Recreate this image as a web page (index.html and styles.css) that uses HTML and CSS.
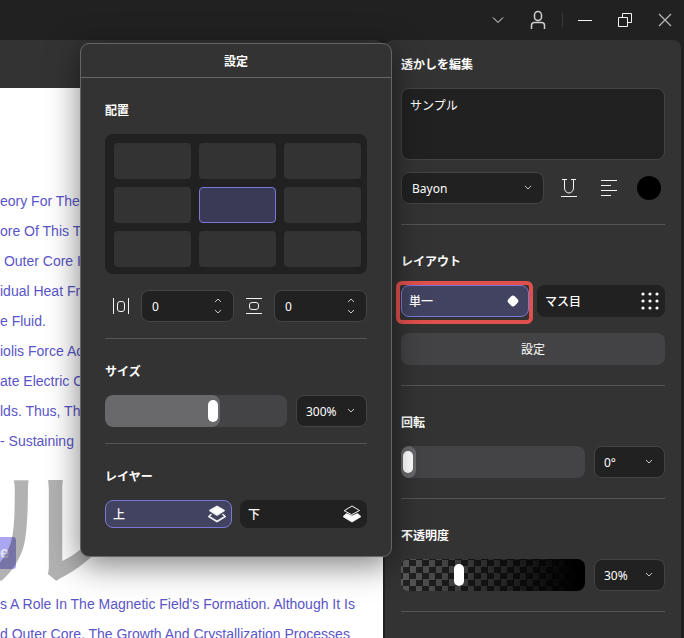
FILE: index.html
```html
<!DOCTYPE html>
<html lang="ja">
<head>
<meta charset="utf-8">
<meta name="viewport" content="width=device-width, initial-scale=1">
<title>透かしを編集</title>
<link rel="stylesheet" href="styles.css">
</head>
<body>
<header class="titlebar">
  <button class="win-btn" aria-label="メニュー"><svg width="12" height="8" viewBox="0 0 12 8"><path d="M1 1.500l5 5 5-5"/></svg></button>
  <button class="win-btn" aria-label="アカウント"><svg class="person" width="16" height="20" viewBox="0 0 16 20"><rect x="4.500" y="1.500" width="7" height="9" rx="3.500"/><path d="M1.500 19v-3.500a3 3 0 0 1 3-3h7a3 3 0 0 1 3 3V19"/></svg></button>
  <span class="win-sep"></span>
  <button class="win-btn" aria-label="最小化"><svg width="14" height="15" viewBox="0 0 14 15"><path d="M0 7.500h14"/></svg></button>
  <button class="win-btn" aria-label="元に戻す"><svg width="14" height="14" viewBox="0 0 14 14"><path d="M.5 4.500h9v9h-9zM4.500 4.500v-4h9v9h-4"/></svg></button>
  <button class="win-btn" aria-label="閉じる"><svg class="close" width="14" height="14" viewBox="0 0 14 14"><path d="M1 1l12 12M13 1L1 13"/></svg></button>
</header>

<main class="workspace">
  <section class="document">
    <div class="toolbar"></div>
    <article class="page">
      <p class="lines">eory For The<br>ore Of This Th<br>&nbsp;Outer Core I<br>idual Heat Fr<br>e Fluid.<br>iolis Force Ac<br>ate Electric C<br>lds. Thus, Th<br>- Sustaining</p>
      <h2 class="page-heading"><mark>e</mark></h2>
      <p class="lines">s A Role In The Magnetic Field's Formation. Although It Is<br>d Outer Core. The Growth And Crystallization Processes</p>
      <div class="watermark">ル</div>
    </article>
  </section>

  <aside class="panel">
    <section class="group">
      <h2><label for="wm-text">透かしを編集</label></h2>
      <textarea id="wm-text" class="field text-area">サンプル</textarea>
      <div class="format-row">
        <div class="picker font-picker">
          <select class="field" aria-label="フォント"><option>Bayon</option></select>
          <svg width="8" height="6" viewBox="0 0 8 6"><path d="M1 1l3 3 3-3"/></svg>
        </div>
        <button class="icon-btn" aria-label="下線"><svg width="16" height="18" viewBox="0 0 16 18"><path d="M1 .5h5M10 .5h5M3.500.5v8.500a4.500 5 0 0 0 9 0V.5M0 17.500h16"/></svg></button>
        <button class="icon-btn" aria-label="左揃え"><svg width="16" height="17" viewBox="0 0 16 17"><path d="M0 .5h16M0 5.500h10M0 10.500h16M0 15.500h10"/></svg></button>
        <button class="color-btn" aria-label="色"></button>
      </div>
    </section>

    <section class="group">
      <h2>レイアウト</h2>
      <div class="choices">
        <div class="callout">
          <button class="choice selected"><span>単一</span><svg class="solid" width="22" height="20" viewBox="0 0 22 20"><path d="M9 5.600a2.800 2.800 0 0 1 4 0l2.400 2.400a2.800 2.800 0 0 1 0 4l-2.400 2.400a2.800 2.800 0 0 1-4 0l-2.400-2.400a2.800 2.800 0 0 1 0-4z"/></svg></button>
        </div>
        <button class="choice"><span>マス目</span><svg class="solid" width="20" height="20" viewBox="0 0 20 20"><g><circle cx="3" cy="3" r="1.600"/><circle cx="10" cy="3" r="1.600"/><circle cx="17" cy="3" r="1.600"/><circle cx="3" cy="10" r="1.600"/><circle cx="10" cy="10" r="1.600"/><circle cx="17" cy="10" r="1.600"/><circle cx="3" cy="17" r="1.600"/><circle cx="10" cy="17" r="1.600"/><circle cx="17" cy="17" r="1.600"/></g></svg></button>
      </div>
      <button class="wide-btn">設定</button>
    </section>

    <section class="group">
      <h2><label for="rotation">回転</label></h2>
      <div class="slider-row">
        <div class="slider" style="--value: 0"><span class="fill"></span><input id="rotation" type="range" min="0" max="360" value="0"></div>
        <div class="picker small"><select class="field" aria-label="回転角度"><option>0°</option></select><svg width="8" height="6" viewBox="0 0 8 6"><path d="M1 1l3 3 3-3"/></svg></div>
      </div>
    </section>

    <section class="group">
      <h2><label for="opacity">不透明度</label></h2>
      <div class="slider-row">
        <div class="slider checker"><input id="opacity" type="range" min="0" max="100" value="30"></div>
        <div class="picker small"><select class="field" aria-label="不透明度の値"><option>30%</option></select><svg width="8" height="6" viewBox="0 0 8 6"><path d="M1 1l3 3 3-3"/></svg></div>
      </div>
    </section>
  </aside>

  <div class="popup" role="dialog" aria-labelledby="popup-title">
    <h1 id="popup-title">設定</h1>
    <div class="popup-body">
      <section class="group">
        <h2>配置</h2>
        <div class="anchor-grid">
          <button aria-label="左上"></button><button aria-label="上中央"></button><button aria-label="右上"></button>
          <button aria-label="左中央"></button><button class="active" aria-label="中央"></button><button aria-label="右中央"></button>
          <button aria-label="左下"></button><button aria-label="下中央"></button><button aria-label="右下"></button>
        </div>
        <div class="offset-row">
          <label for="off-x" aria-label="横位置"><svg width="16" height="16" viewBox="0 0 16 16"><path d="M.5 0v16M15.500 0v16"/><rect x="4.500" y="3.500" width="7" height="10" rx="2.500"/></svg></label>
          <div class="stepper"><input id="off-x" class="field" type="number" value="0"><span class="arrows"><svg width="8" height="5" viewBox="0 0 8 5"><path d="M1 4l3-3 3 3"/></svg><svg width="8" height="5" viewBox="0 0 8 5"><path d="M1 1l3 3 3-3"/></svg></span></div>
          <label for="off-y" aria-label="縦位置"><svg width="16" height="16" viewBox="0 0 16 16"><path d="M0 .5h16M0 15.500h16"/><rect x="3.500" y="4.500" width="9" height="7" rx="2.500"/></svg></label>
          <div class="stepper"><input id="off-y" class="field" type="number" value="0"><span class="arrows"><svg width="8" height="5" viewBox="0 0 8 5"><path d="M1 4l3-3 3 3"/></svg><svg width="8" height="5" viewBox="0 0 8 5"><path d="M1 1l3 3 3-3"/></svg></span></div>
        </div>
      </section>

      <section class="group">
        <h2><label for="size">サイズ</label></h2>
        <div class="slider-row">
          <div class="slider" style="--value: 0.6"><span class="fill"></span><input id="size" type="range" min="0" max="500" value="300"></div>
          <div class="picker small"><select class="field" aria-label="サイズの値"><option>300%</option></select><svg width="8" height="6" viewBox="0 0 8 6"><path d="M1 1l3 3 3-3"/></svg></div>
        </div>
      </section>

      <section class="group">
        <h2>レイヤー</h2>
        <div class="choices">
          <button class="choice selected"><span>上</span><svg class="layers" width="20" height="18" viewBox="0 0 20 18"><path class="front" d="M10 1.500l7 4-7 4.500-7-4.500z"/><path d="M4 9.500L1.800 11.500 10 16.500l8.200-5L16 9.500"/></svg></button>
          <button class="choice"><span>下</span><svg class="layers" width="20" height="18" viewBox="0 0 20 18"><path class="back" d="M2.500 5.500L10 1l7.500 4.500L10 9.500z"/><path class="front" d="M4.500 9L1.800 11.500 10 16.500l8.200-5L15.500 9 10 11.500z"/></svg></button>
        </div>
      </section>
    </div>
  </div>
</main>
</body>
</html>
```
FILE: styles.css
```css
:root {
  --surface: #333333;
  --dark: #212122;
  --line: #444345;
  --accent: #7b77d8;
  --ui: "Noto Sans", "Noto Sans CJK JP", sans-serif;
}

* { box-sizing: border-box; }

body {
  margin: 0;
  min-height: 100vh;
  display: flex;
  flex-direction: column;
  background: #212121;
  color: #fff;
  font: 12px/24px var(--ui);
}

h1, h2, p { margin: 0; }

button, input, select, textarea {
  font: inherit;
  color: inherit;
  margin: 0;
}

button {
  border: 0;
  padding: 0;
  background: none;
}

svg {
  display: block;
  fill: none;
  stroke: #f4f4f4;
}

/* Title bar */
.titlebar {
  display: flex;
  justify-content: flex-end;
  align-items: center;
  gap: 4px;
  height: 40px;
  padding-right: 1px;
}

.win-btn {
  display: grid;
  place-items: center;
  width: 36px;
  height: 40px;
}

.win-btn .person { stroke: #cfcfcf; stroke-width: 1.5; }
.win-btn .close { stroke: #b5b5b5; stroke-width: 1.3; }

.win-sep {
  width: 1px;
  height: 14px;
  margin-left: 2px;
  background: #393939;
}

/* Workspace */
.workspace {
  position: relative;
  flex: 1;
  display: flex;
  gap: 2px;
  padding-right: 3px;
}

.document {
  flex: 1;
  min-width: 0;
  display: flex;
  flex-direction: column;
}

.toolbar {
  height: 48px;
  border-top-right-radius: 8px;
  background: var(--surface);
}

.page {
  position: relative;
  flex: 1 0 0;
  min-height: 550px;
  max-height: calc(100vh - 88px);
  padding-top: 98px;
  overflow: hidden;
  background: #fff;
  color: #5a55c8;
  font-family: "Liberation Sans", Arial, sans-serif;
  font-size: 14px;
}

.lines {
  line-height: 30px;
  white-space: nowrap;
}

.page-heading {
  margin: 81px 0 20px;
  font-size: 16px;
  font-weight: 700;
  line-height: 32px;
}

.page-heading mark {
  display: block;
  width: 16px;
  border-radius: 0 3px 3px 0;
  background: #aaa6f0;
  color: #e4e2f4;
}

.watermark {
  position: absolute;
  left: -18px;
  top: 370px;
  color: rgba(0, 0, 0, 0.3);
  font-family: "Noto Sans CJK JP", sans-serif;
  font-size: 128px;
  font-weight: 500;
  line-height: 128px;
}

/* Side panel */
.panel {
  width: 296px;
  padding: 12px 16px;
  border-radius: 8px 8px 0 0;
  background: var(--surface);
}

.group h2 {
  margin-bottom: 10px;
  font-size: 12px;
  font-weight: 700;
  line-height: 26px;
}

.panel .group {
  padding-bottom: 20px;
  margin-bottom: 24px;
  border-bottom: 1px solid #555;
}

.field {
  display: block;
  width: 100%;
  height: 32px;
  padding: 0 10px;
  border: 1px solid var(--line);
  border-radius: 8px;
  background: var(--dark);
  outline: 0;
  appearance: none;
}

.text-area {
  height: 72px;
  padding: 5px 8px;
  resize: none;
}

.picker, .stepper { position: relative; }

.picker .field { padding-top: 1px; }
.picker.small { width: 71px; }
.picker.small .field { padding-left: 9px; }

.picker svg {
  position: absolute;
  right: 12px;
  top: 13px;
  stroke: #c8c8c8;
  pointer-events: none;
}

.format-row {
  display: flex;
  align-items: center;
  gap: 16px;
  margin-top: 12px;
  padding-right: 4px;
}

.font-picker { flex: 1; margin-right: -3px; }

.icon-btn {
  display: grid;
  place-items: center;
  width: 24px;
  height: 24px;
}

.color-btn {
  width: 24px;
  height: 24px;
  border-radius: 50%;
  background: #000;
}

.choices {
  display: grid;
  grid-template-columns: 1fr 1fr;
  gap: 8px;
}

.choice {
  display: flex;
  align-items: center;
  justify-content: space-between;
  width: 100%;
  height: 32px;
  padding: 0 5px 0 8px;
  border-radius: 8px;
  background: var(--dark);
  font-weight: 500;
}

.choice span { padding-top: 2px; }

.choice.selected {
  padding: 0 4px 0 7px;
  border: 1px solid var(--accent);
  background: #424361;
}

.solid { fill: #fff; stroke: none; }

.callout { position: relative; }

.callout::after {
  content: "";
  position: absolute;
  inset: -4px -4px -7px -5px;
  border: 4px solid #e0504c;
  border-radius: 6px;
  pointer-events: none;
}

.wide-btn {
  width: 100%;
  height: 32px;
  margin-top: 16px;
  padding-top: 2px;
  border-radius: 8px;
  background: #434244;
}

/* Sliders */
.slider-row {
  display: flex;
  gap: 9px;
}

.slider {
  position: relative;
  flex: 1;
  height: 32px;
  border-radius: 8px;
  background: #444346;
  overflow: hidden;
}

.fill {
  position: absolute;
  inset: 0 auto 0 0;
  width: calc(15px + (100% - 15px) * var(--value));
  border-radius: 8px;
  background: #69686b;
}

.slider input {
  position: relative;
  display: block;
  width: 100%;
  height: 32px;
  background: none;
  outline: 0;
  appearance: none;
}

.slider input::-webkit-slider-thumb {
  width: 14px;
  height: 32px;
  border: 5px solid transparent;
  border-width: 5px 2px;
  border-radius: 7px / 10px;
  background: #fff;
  background-clip: padding-box;
  appearance: none;
}

.checker {
  background:
    linear-gradient(90deg, transparent, #000 95%),
    repeating-conic-gradient(#222 0 25%, #585858 0 50%) 2px 1px / 13px 13px;
}

/* Settings popup */
.popup {
  position: absolute;
  top: 3px;
  right: 292px;
  width: 312px;
  border: 1px solid #656565;
  border-radius: 9px;
  background: var(--surface);
  box-shadow: 0 8px 32px rgba(0, 0, 0, 0.5);
}

.popup h1 {
  height: 34px;
  border-bottom: 1px solid #656565;
  font-size: 12px;
  font-weight: 700;
  line-height: 36px;
  text-align: center;
}

.popup-body { padding: 20px 24px 28px; }

.popup .group + .group {
  margin-top: 16px;
  padding-top: 20px;
  border-top: 1px solid #555;
}

.anchor-grid {
  display: grid;
  grid-template-columns: repeat(3, 1fr);
  grid-auto-rows: 36px;
  gap: 8px;
  padding: 9px 6px 7px 9px;
  border-radius: 8px;
  background: var(--dark);
}

.anchor-grid button {
  border-radius: 4px;
  background: var(--surface);
}

.anchor-grid .active {
  border: 1px solid var(--accent);
  background: #3a3956;
}

.offset-row {
  display: grid;
  grid-template-columns: 24px 1fr 16px 1fr;
  align-items: center;
  gap: 12px;
  margin-top: 16px;
}

.offset-row label { justify-self: end; }

.stepper input::-webkit-inner-spin-button { appearance: none; margin: 0; }

.arrows {
  position: absolute;
  top: 8px;
  right: 12px;
  display: grid;
  gap: 6px;
}

.arrows svg { stroke: #c8c8c8; }

.popup .choice { height: 28px; }

.layers .front { fill: #fff; }
.layers path { stroke-linejoin: round; stroke-linecap: round; stroke-width: 1.6; }
.layers .back { stroke-width: 1; }
```
